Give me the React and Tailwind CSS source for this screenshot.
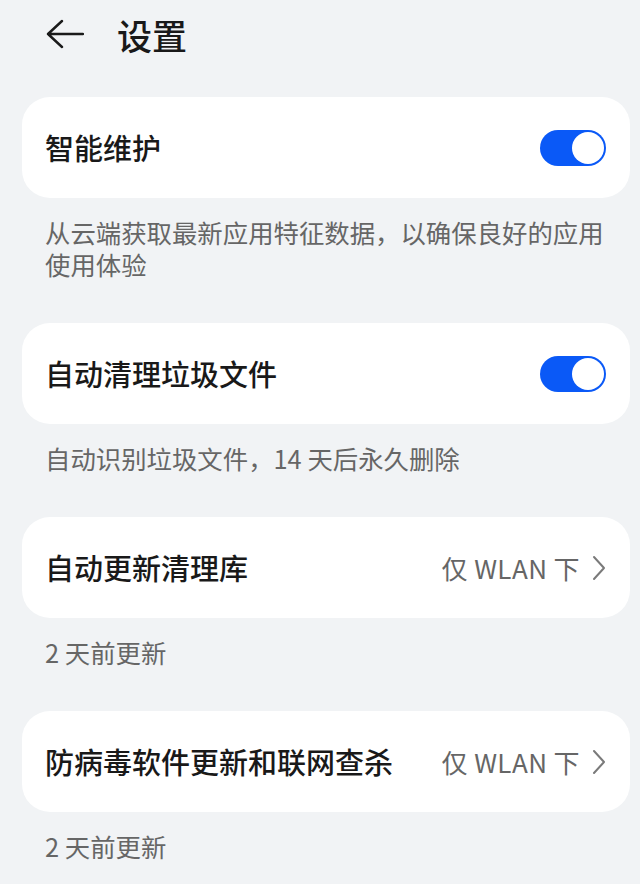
const font = { fontFamily: '"Noto Sans CJK SC", "Noto Sans", sans-serif' }

function Toggle() {
  return (
    <div className="relative w-[66px] h-[36px] rounded-full bg-[#0a59f7] shrink-0">
      <div className="absolute right-[2px] top-[2px] w-[32px] h-[32px] rounded-full bg-white" />
    </div>
  )
}

function Chevron() {
  return (
    <svg width="14" height="26" viewBox="0 0 14 26" fill="none" className="shrink-0">
      <path d="M2 2 L12 13 L2 24" stroke="#7a7a7a" strokeWidth="2" strokeLinecap="round" strokeLinejoin="round" />
    </svg>
  )
}

function Section({ title, right, desc }) {
  return (
    <div>
      <div className="h-[101px] rounded-[28px] bg-white flex items-center pl-[23px] pr-[24px]">
        <span className="flex-1 text-[29px] font-medium text-[#191919] leading-none">{title}</span>
        {right === 'toggle' ? (
          <Toggle />
        ) : (
          <div className="flex items-center gap-[12px]">
            <span className="text-[26px] tracking-[0.4px] text-[#666666] leading-none">仅 WLAN 下</span>
            <Chevron />
          </div>
        )}
      </div>
      <p className="pl-[23px] pr-[20px] pt-[18px] pb-[43px] text-[25.4px] leading-[32px] text-[#666666]">{desc}</p>
    </div>
  )
}

export default function App() {
  return (
    <div style={font} className="w-[640px] h-[884px] bg-[#f1f3f5] overflow-hidden">
      <div className="h-[68px] flex items-center pl-[46px]">
        <svg width="38" height="30" viewBox="0 0 38 30" fill="none">
          <path d="M37 15 H2 M16 2 L2 15 L16 28" stroke="#1a1a1a" strokeWidth="2.4" strokeLinecap="round" strokeLinejoin="round" />
        </svg>
        <span className="ml-[33px] text-[35px] font-medium text-[#191919] leading-none">设置</span>
      </div>
      <div className="pt-[29px] pl-[22px] pr-[10px]">
        <Section title="智能维护" right="toggle" desc="从云端获取最新应用特征数据，以确保良好的应用使用体验" />
        <Section title="自动清理垃圾文件" right="toggle" desc="自动识别垃圾文件，14 天后永久删除" />
        <Section title="自动更新清理库" right="wlan" desc="2 天前更新" />
        <Section title="防病毒软件更新和联网查杀" right="wlan" desc="2 天前更新" />
      </div>
    </div>
  )
}
